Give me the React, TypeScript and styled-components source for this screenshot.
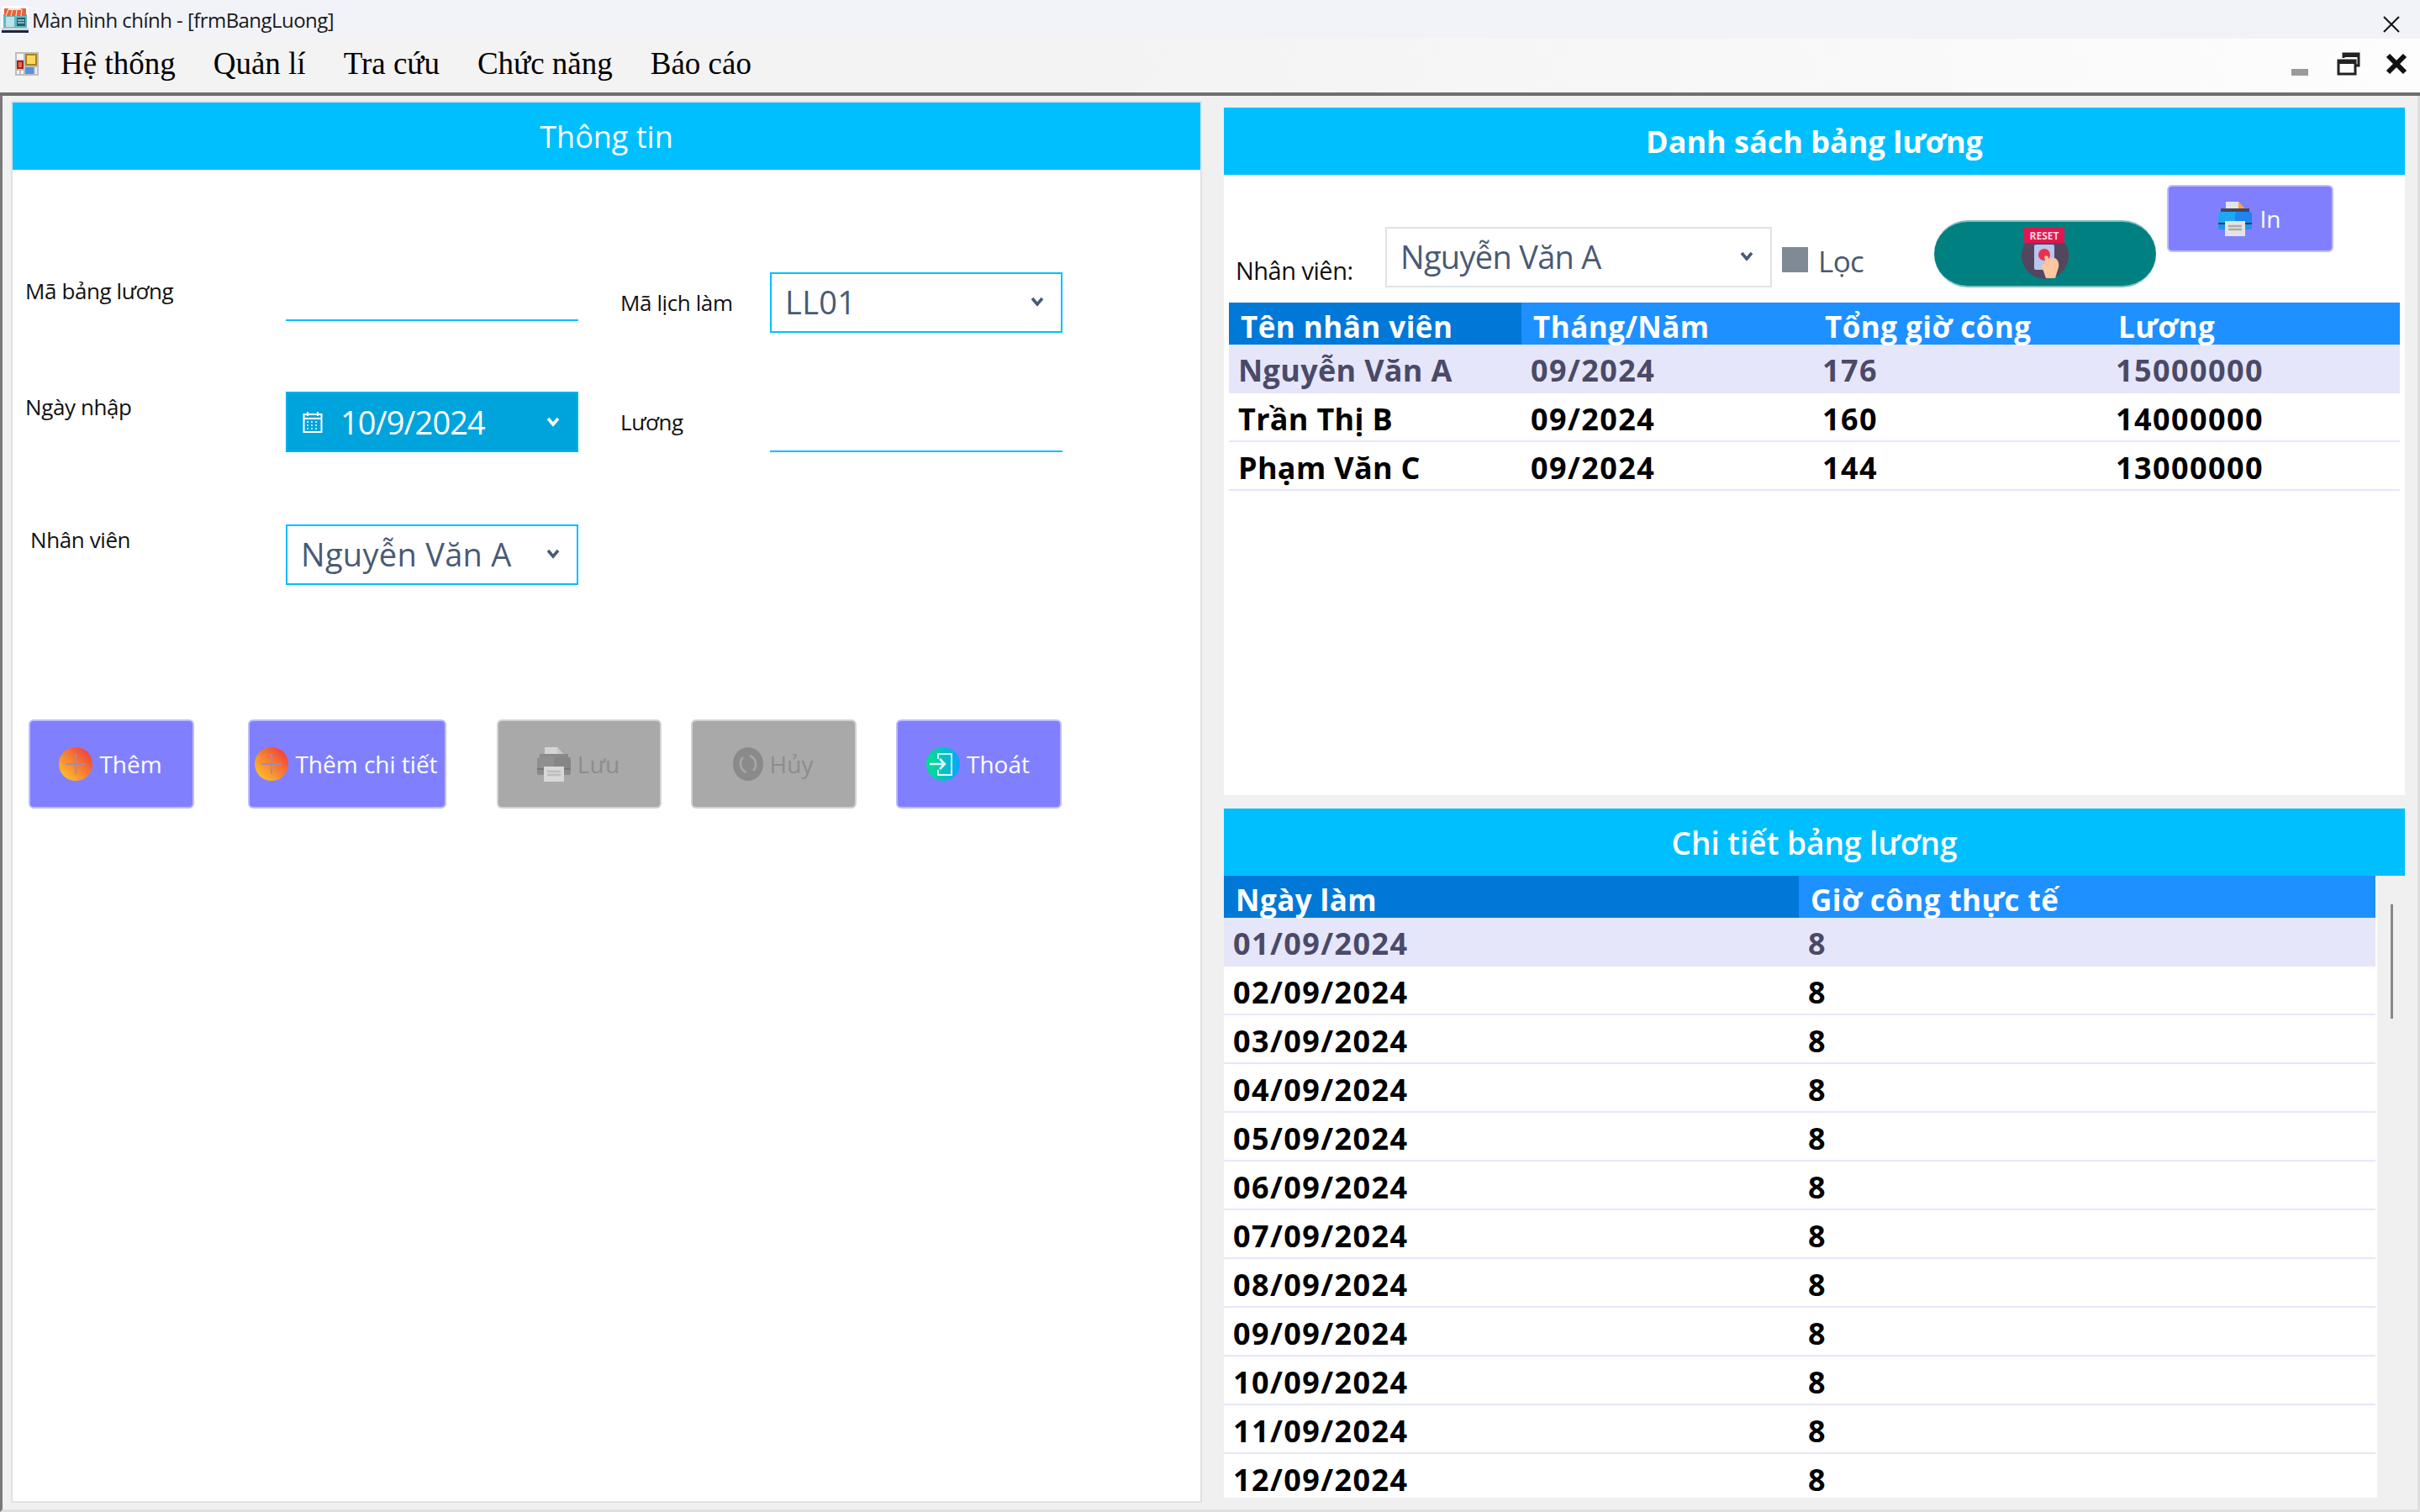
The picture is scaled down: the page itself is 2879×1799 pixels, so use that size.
import React from 'react';
import styled, { createGlobalStyle } from 'styled-components';

const GlobalStyle = createGlobalStyle`
  html, body {
    margin: 0;
    padding: 0;
    background: #f0f0f0;
  }
  * {
    box-sizing: border-box;
  }
`;

const UI_FONT = `"Open Sans", "Noto Sans", sans-serif`;

const Page = styled.div`
  width: 2879px;
  height: 1799px;
  display: flex;
  flex-direction: column;
  overflow: hidden;
  font-family: ${UI_FONT};
  background: #f0f0f0;
`;

const TitleBar = styled.div`
  height: 46px;
  flex: none;
  display: flex;
  align-items: center;
  padding: 0 0 0 2px;
  gap: 4px;
  background: #f1f3f9;
  font-size: 24px;
  color: #1a1a1a;
`;

const TitleText = styled.span`
  flex: 1;
  letter-spacing: -0.55px;
`;

const TitleClose = styled.div`
  width: 20px;
  height: 20px;
  margin-right: 24px;
  color: #111;
`;

const MenuBar = styled.div`
  height: 68px;
  flex: none;
  display: flex;
  align-items: center;
  padding: 0 15px 4px 18px;
  background: linear-gradient(90deg, #f3f3f3 0%, #f3f3f3 45%, #fdfdfd 100%);
  border-bottom: 4px solid;
  border-image: linear-gradient(#a0a0a0, #a0a0a0 50%, #6e6e6e 50%) 4;
`;

const MenuItems = styled.div`
  flex: 1;
  display: flex;
  gap: 45px;
  margin-left: 26px;
`;

const MenuItem = styled.span`
  font-family: "Liberation Serif", serif;
  font-size: 37px;
  line-height: 44px;
  color: #000;
`;

const WindowButtons = styled.div`
  display: flex;
  align-items: center;
  gap: 30px;
`;

const MinimizeBox = styled.div`
  width: 20px;
  height: 8px;
  margin: 20px 4px 0 0;
  background: #9a9a9a;
`;

const Body = styled.div`
  flex: 1;
  min-height: 0;
  display: grid;
  grid-template-columns: 1417px 1405px;
  column-gap: 26px;
  padding: 6px 0 0 10px;
  border-left: 3px solid #7a7a7a;
  border-right: 3px solid #dfdfdf;
  border-bottom: 3px solid #e0e0e0;
`;

const LeftPanel = styled.section`
  height: 1668px;
  background: #fff;
  border: 2px solid #dee2e6;
`;

const Header = styled.h2<{ $size?: number; $weight?: number }>`
  margin: 0;
  height: 80px;
  display: flex;
  align-items: center;
  justify-content: center;
  background: #00bfff;
  color: #fff;
  font-size: ${(p) => p.$size ?? 36}px;
  font-weight: ${(p) => p.$weight ?? 400};
`;

const Form = styled.div`
  padding: 122px 0 0 15px;
`;

const FormRow = styled.div<{ $gap?: number }>`
  display: grid;
  grid-template-columns: 310px 348px 50px 178px 348px;
  height: 72px;
  margin-top: ${(p) => p.$gap ?? 0}px;
`;

const FieldLabel = styled.label<{ $top: number; $left?: number }>`
  padding-top: ${(p) => p.$top}px;
  padding-left: ${(p) => p.$left ?? 0}px;
  font-size: 26px;
  line-height: 36px;
  letter-spacing: -0.4px;
  color: #111;
  white-space: nowrap;
`;

const Spacer = styled.span``;

const UnderlineInput = styled.input<{ $height: number }>`
  width: 348px;
  height: ${(p) => p.$height}px;
  background: transparent;
  border: 0;
  border-bottom: 2px solid #00bfff;
  outline: none;
`;

const Combo = styled.div<{ $borderColor?: string; $width?: number }>`
  width: ${(p) => p.$width ?? 348}px;
  height: 72px;
  display: flex;
  align-items: center;
  justify-content: space-between;
  padding: 0 20px 2px 16px;
  background: #fff;
  border: 2px solid ${(p) => p.$borderColor ?? '#00bfff'};
  color: #495a75;
  font-size: 38px;
  white-space: nowrap;
`;

const ComboValue = styled.span<{ $tight?: boolean }>`
  letter-spacing: ${(p) => (p.$tight ? '-0.7px' : '0.3px')};
`;

const DateBox = styled.div`
  width: 348px;
  height: 72px;
  display: flex;
  align-items: center;
  padding: 0 20px 0 18px;
  gap: 21px;
  background: #00a4dc;
  border: 2px solid #00b2ee;
  color: #fff;
  font-size: 38px;
`;

const DateValue = styled.span`
  flex: 1;
  letter-spacing: -0.9px;
`;

const Actions = styled.div`
  display: flex;
  margin-top: 160px;
  padding-left: 19px;
`;

const ActionButton = styled.button<{ $width: number; $offset?: number; $off?: boolean }>`
  width: ${(p) => p.$width}px;
  height: 106px;
  margin-left: ${(p) => p.$offset ?? 0}px;
  display: flex;
  align-items: center;
  justify-content: center;
  gap: 8px;
  padding: 0 2px 0 0;
  border: 2px solid ${(p) => (p.$off ? '#d2d2d2' : '#bcbcff')};
  border-radius: 6px;
  background: ${(p) => (p.$off ? '#a9a9a9' : '#8080ff')};
  color: ${(p) => (p.$off ? '#8d8d8d' : '#fff')};
  font-family: ${UI_FONT};
  font-size: 28px;
  white-space: nowrap;
`;

const RightColumn = styled.div`
  display: flex;
  flex-direction: column;
  gap: 16px;
  padding-top: 8px;
`;

const ListPanel = styled.section`
  height: 818px;
  background: #fff;
`;

const Toolbar = styled.div`
  height: 152px;
  display: flex;
  align-items: flex-start;
  padding-left: 14px;
`;

const ToolbarLabel = styled.label`
  width: 178px;
  margin-top: 96px;
  font-size: 29px;
  line-height: 36px;
  letter-spacing: -0.5px;
  color: #111;
`;

const ComboSlot = styled.div`
  margin-top: 62px;
`;

const CheckBox = styled.span`
  width: 31px;
  height: 30px;
  margin: 86px 0 0 12px;
  background: #7f8a96;
`;

const CheckLabel = styled.span`
  margin: 80px 0 0 12px;
  width: 138px;
  font-size: 35px;
  line-height: 46px;
  letter-spacing: -0.6px;
  color: #4a5a70;
`;

const ResetButton = styled.button`
  width: 264px;
  height: 80px;
  margin-top: 54px;
  display: flex;
  align-items: center;
  justify-content: center;
  padding: 0;
  border: 0;
  border-bottom: 2px solid #7fbfbf;
  border-top: 2px solid #7fbfbf;
  border-radius: 40px;
  background: #008080;
`;

const PrintButton = styled(ActionButton)`
  margin-top: 12px;
  height: 80px;
  gap: 10px;
`;

const DataTable = styled.div<{ $width: number; $left?: number }>`
  width: ${(p) => p.$width}px;
  margin-left: ${(p) => p.$left ?? 0}px;
`;

const HeadRow = styled.div<{ $columns: string }>`
  display: grid;
  grid-template-columns: ${(p) => p.$columns};
  height: 50px;
  background: #1e90ff;
`;

const HeadCell = styled.div<{ $sorted?: boolean }>`
  height: 50px;
  padding: 4px 0 0 14px;
  background: ${(p) => (p.$sorted ? '#0078d7' : 'transparent')};
  color: #fff;
  font-size: 35px;
  font-weight: 700;
  line-height: 50px;
  white-space: nowrap;
  letter-spacing: 0.45px;
`;

const DataRow = styled.div<{ $columns: string; $active?: boolean; $partial?: boolean }>`
  display: grid;
  grid-template-columns: ${(p) => p.$columns};
  height: ${(p) => (p.$partial ? 52 : 58)}px;
  align-items: center;
  padding-top: ${(p) => (p.$partial ? 9 : 5)}px;
  background: ${(p) => (p.$active ? '#e6e6fa' : '#fff')};
  border-bottom: ${(p) => (p.$partial ? 'none' : '2px solid #e6e6fa')};
  color: ${(p) => (p.$active ? '#4a4a68' : '#000')};
`;

const DataCell = styled.div<{ $numeric?: boolean }>`
  padding-left: 11px;
  font-size: 36px;
  font-weight: 700;
  line-height: 40px;
  white-space: nowrap;
  letter-spacing: ${(p) => (p.$numeric ? '1.4px' : '0.3px')};
`;

const DetailPanel = styled.section`
  height: 820px;
  display: flex;
  flex-direction: column;
`;

const DetailBody = styled.div`
  flex: 1;
  min-height: 0;
  display: flex;
`;

const DetailTable = styled.div`
  width: 1372px;
  background: #fff;
`;

const ScrollTrack = styled.div`
  flex: 1;
  padding: 34px 0 0 16px;
`;

const ScrollThumb = styled.div`
  width: 3px;
  height: 136px;
  background: #888;
`;

const Chevron = () => (
  <svg width="16" height="12" viewBox="0 0 16 12" fill="none" stroke="currentColor" strokeWidth="3.5">
    <path d="M2 2l6 7 6-7" />
  </svg>
);

const CalendarIcon = () => (
  <svg width="24" height="26" viewBox="0 0 24 26" fill="none" stroke="#fff" strokeWidth="2">
    <rect x="1.5" y="4" width="21" height="21" />
    <path d="M1.5 9h21M6 1v5M18 1v5" />
    <path d="M5 13h2M10 13h2M15 13h2M5 17h2M10 17h2M15 17h2M5 21h2M10 21h2M15 21h2" strokeWidth="1.6" />
  </svg>
);

const PlusIcon = ({ id }: { id: string }) => (
  <svg width="40" height="40" viewBox="0 0 40 40">
    <defs>
      <linearGradient id={id} x1="0" y1="1" x2="1" y2="0">
        <stop offset="0" stopColor="#ffd02a" />
        <stop offset="1" stopColor="#ee2f3c" />
      </linearGradient>
    </defs>
    <circle cx="20" cy="20" r="20" fill={`url(#${id})`} />
    <path d="M20 8v24M8 20h24" stroke="#a88aa6" strokeWidth="2" />
  </svg>
);

const ExitIcon = () => (
  <svg width="40" height="40" viewBox="0 0 40 40">
    <defs>
      <linearGradient id="exitFill" x1="0" y1="0" x2="1" y2="0">
        <stop offset="0" stopColor="#00e08a" />
        <stop offset="1" stopColor="#0aa5ff" />
      </linearGradient>
    </defs>
    <circle cx="20" cy="20" r="20" fill="url(#exitFill)" />
    <path d="M14 14V8h16v25H14v-6" fill="none" stroke="#d6fff4" strokeWidth="2" />
    <path d="M4 20h18M16 14l6 6-6 6" fill="none" stroke="#e8fff8" strokeWidth="2.5" />
  </svg>
);

const PrinterIcon = ({ off }: { off?: boolean }) => (
  <svg width="40" height="42" viewBox="0 0 40 42">
    <path d="M9 1h15l7 8v8H9z" fill={off ? '#d4d4d4' : '#e4e4e4'} />
    <path d="M24 1l7 8h-7z" fill={off ? '#c8c8c8' : '#f6a53a'} />
    <rect x="3" y="9" width="34" height="6" fill={off ? '#8a8a8a' : '#45455c'} />
    <rect x="0" y="13" width="40" height="17" rx="3" fill={off ? '#8f8f8f' : '#1ea8f2'} />
    <rect x="20" y="13" width="20" height="17" rx="3" fill={off ? '#868686' : '#1e84ef'} />
    <rect x="0" y="26" width="40" height="2" fill={off ? '#777' : '#3a3a4e'} />
    <rect x="0" y="28" width="40" height="6" rx="2" fill={off ? '#8a8a8a' : '#1e94f0'} />
    <rect x="8" y="24" width="24" height="18" fill={off ? '#d8d8d8' : '#e4e4e4'} />
    <path d="M12 30h16M12 34h16" stroke={off ? '#bdbdbd' : '#aaa'} strokeWidth="2.5" />
  </svg>
);

const CancelIcon = () => (
  <svg width="36" height="40" viewBox="0 0 36 40">
    <ellipse cx="18" cy="20" rx="18" ry="20" fill="#8a8a8a" />
    <path d="M12 12a11 11 0 0 0 4 18M24 28a11 11 0 0 0-4-18" fill="none" stroke="#a8a8a8" strokeWidth="2.5" />
  </svg>
);

const ResetIcon = () => (
  <svg width="58" height="62" viewBox="0 0 58 62">
    <circle cx="29" cy="33" r="28" fill="#54465f" />
    <rect x="4" y="0" width="48" height="18" fill="#e3154f" />
    <text x="28" y="14" textAnchor="middle" fontFamily='"Open Sans", sans-serif' fontSize="12" fontWeight="700" fill="#f4d8df">
      RESET
    </text>
    <rect x="16" y="20" width="24" height="30" rx="2" fill="#b9c6ee" />
    <circle cx="28" cy="32" r="7" fill="#e8324c" />
    <path d="M28 34c3-2 5 0 5 3l7-1c4 1 6 6 5 11l-4 13H30l-5-14c0-3 3-4 5-2z" fill="#fdc79f" />
  </svg>
);

const StoreIcon = () => (
  <svg width="32" height="32" viewBox="0 0 32 32">
    <rect x="0" y="0" width="32" height="32" fill="#fff" />
    <rect x="2" y="10" width="28" height="16" fill="#5fb8c8" />
    <rect x="3" y="3" width="26" height="9" fill="#e8623c" />
    <path d="M8 4h15" stroke="#fff" strokeWidth="1.5" />
    <path d="M5 12l3-8M11 12l2-8M17 12l1-8M23 12l1-8" stroke="#fbd9c4" strokeWidth="1.2" />
    <rect x="5" y="13" width="10" height="12" fill="#b9e3e8" />
    <rect x="18" y="14" width="10" height="10" fill="#1f5f6f" />
    <path d="M19 17h8M19 20h8" stroke="#9ed6d0" strokeWidth="1.4" />
    <rect x="0" y="26" width="32" height="3" fill="#cfd6d6" />
    <rect x="0" y="29" width="32" height="3" fill="#23233a" />
  </svg>
);

const MdiIcon = () => (
  <svg width="28" height="28" viewBox="0 0 28 28">
    <rect width="28" height="28" fill="#bdbdbd" />
    <rect x="2" y="2" width="8" height="7" fill="#f4f4f4" />
    <rect x="12" y="2" width="14" height="14" fill="#a8821c" />
    <rect x="14" y="4" width="10" height="10" fill="#ffd75e" />
    <rect x="2" y="10" width="8" height="10" fill="#a3231c" />
    <rect x="4" y="12" width="4" height="6" fill="#e86a4a" />
    <rect x="12" y="18" width="10" height="8" fill="#5a8fe0" />
    <rect x="2" y="22" width="3" height="4" fill="#f4f4f4" />
    <rect x="7" y="22" width="3" height="4" fill="#f4f4f4" />
    <rect x="24" y="18" width="2" height="8" fill="#f4f4f4" />
  </svg>
);

const RestoreGlyph = () => (
  <svg width="28" height="28" viewBox="0 0 28 28" fill="none" stroke="#222" strokeWidth="3">
    <path d="M8 7V2h18v14h-5" />
    <path d="M8 4h18" strokeWidth="4" />
    <rect x="2" y="10" width="20" height="16" />
    <path d="M2 12h20" strokeWidth="4" />
  </svg>
);

const CloseGlyph = () => (
  <svg width="26" height="26" viewBox="0 0 26 26" stroke="#111" strokeWidth="6">
    <path d="M3 3l20 20M23 3L3 23" />
  </svg>
);

const MENU = ['Hệ thống', 'Quản lí', 'Tra cứu', 'Chức năng', 'Báo cáo'];

const LIST_COLUMNS = '348px 347px 349px 1fr';
const DETAIL_COLUMNS = '684px 1fr';

const PAYROLL = [
  ['Nguyễn Văn A', '09/2024', '176', '15000000'],
  ['Trần Thị B', '09/2024', '160', '14000000'],
  ['Phạm Văn C', '09/2024', '144', '13000000'],
];

const DAYS = Array.from({ length: 12 }, (_, i) => `${String(i + 1).padStart(2, '0')}/09/2024`);

const App: React.FC = () => {
  return (
    <Page>
      <GlobalStyle />
      <TitleBar>
        <StoreIcon />
        <TitleText>Màn hình chính - [frmBangLuong]</TitleText>
        <TitleClose>
          <svg width="20" height="20" viewBox="0 0 20 20" stroke="currentColor" strokeWidth="2">
            <path d="M1 1l18 18M19 1L1 19" />
          </svg>
        </TitleClose>
      </TitleBar>

      <MenuBar>
        <MdiIcon />
        <MenuItems>
          {MENU.map((item) => (
            <MenuItem key={item}>{item}</MenuItem>
          ))}
        </MenuItems>
        <WindowButtons>
          <MinimizeBox />
          <RestoreGlyph />
          <CloseGlyph />
        </WindowButtons>
      </MenuBar>

      <Body>
        <LeftPanel>
          <Header>Thông tin</Header>
          <Form>
            <FormRow>
              <FieldLabel $top={4}>Mã bảng lương</FieldLabel>
              <UnderlineInput $height={58} readOnly />
              <Spacer />
              <FieldLabel $top={18}>Mã lịch làm</FieldLabel>
              <Combo>
                <ComboValue>LL01</ComboValue>
                <Chevron />
              </Combo>
            </FormRow>
            <FormRow $gap={70}>
              <FieldLabel $top={0}>Ngày nhập</FieldLabel>
              <DateBox>
                <CalendarIcon />
                <DateValue>10/9/2024</DateValue>
                <Chevron />
              </DateBox>
              <Spacer />
              <FieldLabel $top={18}>Lương</FieldLabel>
              <UnderlineInput $height={72} readOnly />
            </FormRow>
            <FormRow $gap={86}>
              <FieldLabel $top={0} $left={6}>
                Nhân viên
              </FieldLabel>
              <Combo>
                <ComboValue>Nguyễn Văn A</ComboValue>
                <Chevron />
              </Combo>
            </FormRow>
          </Form>
          <Actions>
            <ActionButton $width={197}>
              <PlusIcon id="plusA" />
              Thêm
            </ActionButton>
            <ActionButton $width={236} $offset={64}>
              <PlusIcon id="plusB" />
              Thêm chi tiết
            </ActionButton>
            <ActionButton $width={196} $offset={60} $off>
              <PrinterIcon off />
              Lưu
            </ActionButton>
            <ActionButton $width={197} $offset={35} $off>
              <CancelIcon />
              Hủy
            </ActionButton>
            <ActionButton $width={197} $offset={47}>
              <ExitIcon />
              Thoát
            </ActionButton>
          </Actions>
        </LeftPanel>

        <RightColumn>
          <ListPanel>
            <Header $size={36} $weight={700}>Danh sách bảng lương</Header>
            <Toolbar>
              <ToolbarLabel>Nhân viên:</ToolbarLabel>
              <ComboSlot>
                <Combo $borderColor="#dee2e6" $width={460}>
                  <ComboValue $tight>Nguyễn Văn A</ComboValue>
                  <Chevron />
                </Combo>
              </ComboSlot>
              <CheckBox />
              <CheckLabel>Lọc</CheckLabel>
              <ResetButton>
                <ResetIcon />
              </ResetButton>
              <PrintButton $width={198} $offset={13}>
                <PrinterIcon />
                In
              </PrintButton>
            </Toolbar>
            <DataTable $width={1393} $left={6}>
              <HeadRow $columns={LIST_COLUMNS}>
                <HeadCell $sorted>Tên nhân viên</HeadCell>
                <HeadCell>Tháng/Năm</HeadCell>
                <HeadCell>Tổng giờ công</HeadCell>
                <HeadCell>Lương</HeadCell>
              </HeadRow>
              {PAYROLL.map((row, i) => (
                <DataRow key={row[0]} $columns={LIST_COLUMNS} $active={i === 0}>
                  {row.map((cell, j) => (
                    <DataCell key={j} $numeric={j > 0}>
                      {cell}
                    </DataCell>
                  ))}
                </DataRow>
              ))}
            </DataTable>
          </ListPanel>

          <DetailPanel>
            <Header $size={37} $weight={600}>Chi tiết bảng lương</Header>
            <DetailBody>
              <DetailTable>
                <DataTable $width={1370}>
                  <HeadRow $columns={DETAIL_COLUMNS}>
                    <HeadCell $sorted>Ngày làm</HeadCell>
                    <HeadCell>Giờ công thực tế</HeadCell>
                  </HeadRow>
                  {DAYS.map((day, i) => (
                    <DataRow
                      key={day}
                      $columns={DETAIL_COLUMNS}
                      $active={i === 0}
                      $partial={i === DAYS.length - 1}
                    >
                      <DataCell $numeric>{day}</DataCell>
                      <DataCell>8</DataCell>
                    </DataRow>
                  ))}
                </DataTable>
              </DetailTable>
              <ScrollTrack>
                <ScrollThumb />
              </ScrollTrack>
            </DetailBody>
          </DetailPanel>
        </RightColumn>
      </Body>
    </Page>
  );
};

export default App;
